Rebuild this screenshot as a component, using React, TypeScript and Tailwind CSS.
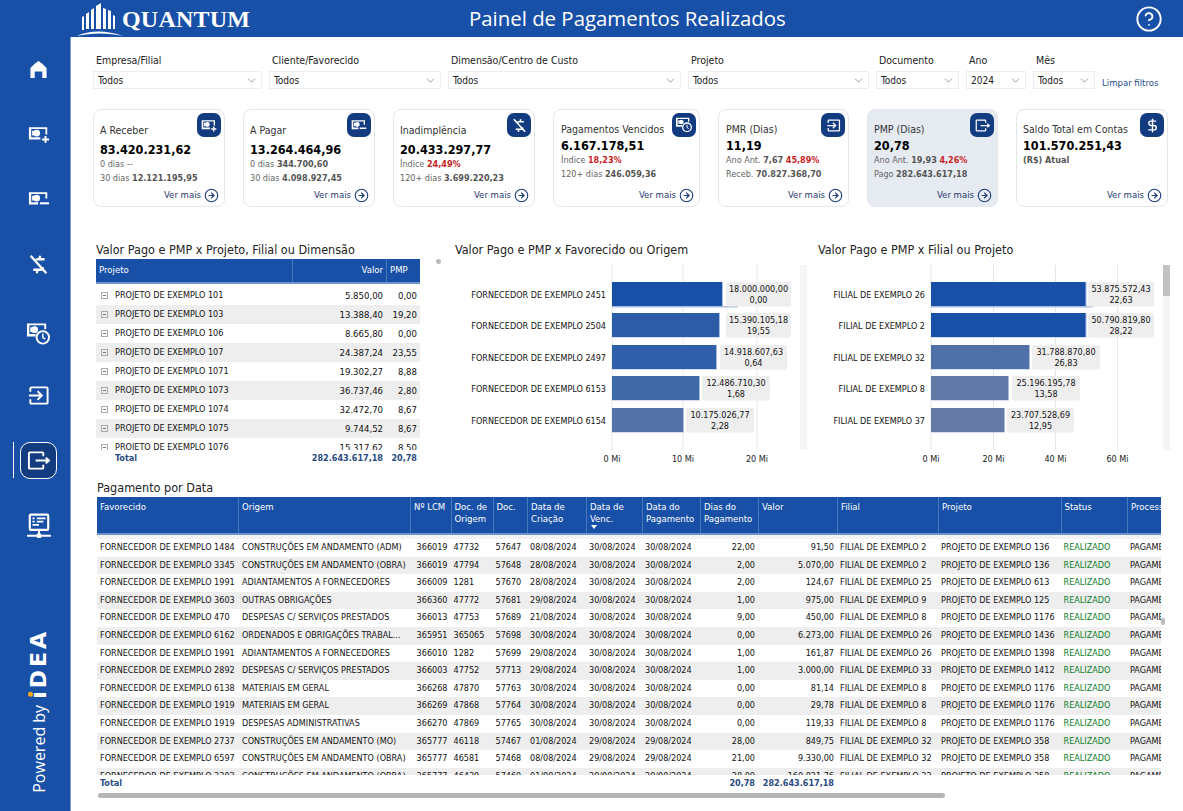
import { CircleArrowRight, CircleHelp, DollarSign, ChevronDown } from "lucide-react";

// ── icons drawn to match the report's own set ──
function MoneyPlus({ className }: { className?: string }) {
  return (
    <svg viewBox="0 0 24 18" className={className} fill="currentColor">
      <path d="M1 1h20v8h-2V3H3.500v9h10v2.500H1z" />
      <circle cx="9.500" cy="7.500" r="3.600" />
      <path d="M4.500 5h2v5h-2z" />
      <path d="M18 10.500h2.200v2.800H23v2.200h-2.800v2.500H18v-2.500h-2.800v-2.200H18z" />
    </svg>
  );
}

function MoneyMinus({ className }: { className?: string }) {
  return (
    <svg viewBox="0 0 24 18" className={className} fill="currentColor">
      <path d="M1 1h20v7h-2V3H3.500v9H11v2.500H1z" />
      <circle cx="9.500" cy="7.500" r="3.600" />
      <path d="M4.500 5h2v5h-2z" />
      <path d="M13 12h10v2.300H13z" />
    </svg>
  );
}

function NoDollar({ className }: { className?: string }) {
  return (
    <svg viewBox="0 0 24 24" className={className} fill="none" stroke="currentColor" strokeWidth="2.600">
      <path d="M3 2l18 20" />
      <path d="M14 2l-1 4M11 18l-1 4" />
      <path d="M19 6h-8a3 3 0 0 0-2 1M17 15a3 3 0 0 1-3 3H6" />
    </svg>
  );
}

function MoneyClock({ className }: { className?: string }) {
  return (
    <svg viewBox="0 0 26 24" className={className}>
      <path fill="currentColor" d="M1 1h20v6h-2V3H3.500v9H10v2.500H1z" />
      <circle cx="9" cy="7.500" r="3.500" fill="currentColor" />
      <path fill="currentColor" d="M4.500 5h2v5h-2z" />
      <circle cx="17.500" cy="15.500" r="6.500" fill="none" stroke="currentColor" strokeWidth="2" />
      <path d="M17.500 11.500v4.300l2.500 1.500" fill="none" stroke="currentColor" strokeWidth="1.500" />
    </svg>
  );
}

function LogIn({ className }: { className?: string }) {
  return (
    <svg viewBox="0 0 24 24" className={className} fill="none" stroke="currentColor" strokeWidth="2">
      <path d="M3.500 8V4.500a1 1 0 0 1 1-1h16a1 1 0 0 1 1 1v15a1 1 0 0 1-1 1h-16a1 1 0 0 1-1-1V16" />
      <path d="M2 12h13M11 7.500l4.500 4.500-4.500 4.500" />
    </svg>
  );
}

function LogOut({ className }: { className?: string }) {
  return (
    <svg viewBox="0 0 24 24" className={className} fill="none" stroke="currentColor" strokeWidth="2">
      <path d="M17 7.500V4.500a1 1 0 0 0-1-1H3a1 1 0 0 0-1 1v15a1 1 0 0 0 1 1h13a1 1 0 0 0 1-1v-3" />
      <path d="M9 12h14M19.500 9l3.500 3-3.500 3" />
    </svg>
  );
}

function Home({ className }: { className?: string }) {
  return (
    <svg viewBox="0 0 20 20" className={className} fill="currentColor">
      <path d="M10 1l4 3 4.500 4.500V19H14v-7H6v7H1.500V8.500L6 4z" />
    </svg>
  );
}

function Monitor({ className }: { className?: string }) {
  return (
    <svg viewBox="0 0 24 24" className={className} fill="none" stroke="currentColor">
      <rect x="3.500" y="1.500" width="17" height="14" rx="1" strokeWidth="2" />
      <path d="M6 5h2M10 5h8M6 8h2M10 8h6M6 11h6" strokeWidth="1.500" />
      <path d="M1 21h22M12 16v5" strokeWidth="1.800" />
      <rect x="10" y="19" width="4" height="4" fill="currentColor" stroke="none" />
    </svg>
  );
}

function QuantumMark() {
  return (
    <svg viewBox="0 0 46 36" className="h-[36px] w-[46px] text-white" fill="currentColor">
      <path d="M9 28V13l3-2v17zM14 28V9l3-2v21zM19 28V5l5-3v26zM26 28V7l3 1v20zM31 28V9l3 1v18zM36 28V14l2 1v13zM5 29V16l2-1v14z" />
      <path d="M0 35c12-6 30-6 46 0-14-3.500-32-3.500-46 0z" />
    </svg>
  );
}

// ── filter bar ──
const FILTERS = [
  { label: "Empresa/Filial", value: "Todos", width: "w-[169px]" },
  { label: "Cliente/Favorecido", value: "Todos", width: "w-[172px]" },
  { label: "Dimensão/Centro de Custo", value: "Todos", width: "w-[233px]" },
  { label: "Projeto", value: "Todos", width: "w-[181px]" },
  { label: "Documento", value: "Todos", width: "w-[83px]" },
  { label: "Ano", value: "2024", width: "w-[60px]" },
  { label: "Mês", value: "Todos", width: "w-[62px]" },
];

function FilterSelect({ label, value, width }: { label: string; value: string; width: string }) {
  return (
    <div className={width}>
      <div className="h-[17px] pl-[3px] text-[10.5px] leading-[13px] text-[#222]">{label}</div>
      <div className="flex h-[18px] items-center justify-between border border-[#eeeeee] pl-[4px] pr-[3px] text-[10px] text-[#222]">
        <span>{value}</span>
        <ChevronDown size={13} strokeWidth={1} className="text-[#444]" />
      </div>
    </div>
  );
}

// ── KPI cards ──
type Kpi = {
  title: string;
  value: string;
  width: string;
  icon: React.ReactNode;
  compact?: boolean;
  active?: boolean;
  inset?: boolean;
  lines: React.ReactNode[];
};

const B = ({ children }: { children: React.ReactNode }) => <span className="font-bold text-[#555]">{children}</span>;
const R = ({ children }: { children: React.ReactNode }) => <span className="font-bold text-[#c81e1e]">{children}</span>;

const KPIS: Kpi[] = [
  {
    title: "A Receber",
    value: "83.420.231,62",
    width: "w-[132px]",
    icon: <MoneyPlus className="h-[13px] w-[16px]" />,
    lines: [<>0 dias --</>, <>30 dias <B>12.121.195,95</B></>],
  },
  {
    title: "A Pagar",
    value: "13.264.464,96",
    width: "w-[132px]",
    icon: <MoneyMinus className="h-[13px] w-[16px]" />,
    lines: [<>0 dias <B>344.700,60</B></>, <>30 dias <B>4.098.927,45</B></>],
  },
  {
    title: "Inadimplência",
    value: "20.433.297,77",
    width: "w-[142px]",
    icon: <NoDollar className="h-[15px] w-[15px]" />,
    lines: [<>Índice <R>24,49%</R></>, <>120+ dias <B>3.699.220,23</B></>],
  },
  {
    title: "Pagamentos Vencidos",
    value: "6.167.178,51",
    width: "w-[147px]",
    compact: true,
    inset: true,
    icon: <MoneyClock className="h-[16px] w-[18px]" />,
    lines: [<>Índice <R>18,23%</R></>, <>120+ dias <B>246.059,36</B></>],
  },
  {
    title: "PMR (Dias)",
    value: "11,19",
    width: "w-[131px]",
    compact: true,
    inset: true,
    icon: <LogIn className="h-[15px] w-[15px]" />,
    lines: [<>Ano Ant. <B>7,67</B> <R>45,89%</R></>, <>Receb. <B>70.827.368,70</B></>],
  },
  {
    title: "PMP (Dias)",
    value: "20,78",
    width: "w-[131px]",
    compact: true,
    active: true,
    icon: <LogOut className="h-[15px] w-[15px]" />,
    lines: [<>Ano Ant. <B>19,93</B> <R>4,26%</R></>, <>Pago <B>282.643.617,18</B></>],
  },
  {
    title: "Saldo Total em Contas",
    value: "101.570.251,43",
    width: "w-[152px]",
    compact: true,
    icon: <DollarSign size={15} strokeWidth={2.2} />,
    lines: [<B>(R$) Atual</B>],
  },
];

function KpiCard({ kpi }: { kpi: Kpi }) {
  return (
    <div
      className={`relative flex h-[98px] flex-col rounded-lg border border-[#e4e6ea] pr-[3px] ${kpi.width} ${
        kpi.active ? "bg-[#e6eaf1]" : "bg-white"
      } ${kpi.compact ? "pt-[13px]" : "pt-[14px]"} ${kpi.inset ? "pl-[7px]" : "pl-[6px]"}`}
    >
      <div className="absolute right-[3px] top-[3px] flex h-[24px] w-[24px] items-center justify-center rounded-[7px] bg-[#133b80] text-white">
        {kpi.icon}
      </div>
      <div className="text-[10.5px] leading-[13px] text-[#333]">{kpi.title}</div>
      <div className={`text-[12.5px] font-bold leading-[15px] text-black ${kpi.compact ? "mt-[2px]" : "mt-[5px]"}`}>{kpi.value}</div>
      <div className="flex flex-col text-[9px] leading-[14px] text-[#666]">
        {kpi.lines.map((line, i) => (
          <div key={i}>{line}</div>
        ))}
      </div>
      <div className="mr-[2px] mt-auto mb-[3px] flex items-center justify-end gap-[3px] text-[9.5px] text-[#1f3a6e]">
        <span>Ver mais</span>
        <CircleArrowRight size={15} strokeWidth={1.8} className="text-[#1f3f7f]" />
      </div>
    </div>
  );
}

// ── project matrix ──
const PROJECTS = [
  ["PROJETO DE EXEMPLO 101", "5.850,00", "0,00"],
  ["PROJETO DE EXEMPLO 103", "13.388,40", "19,20"],
  ["PROJETO DE EXEMPLO 106", "8.665,80", "0,00"],
  ["PROJETO DE EXEMPLO 107", "24.387,24", "23,55"],
  ["PROJETO DE EXEMPLO 1071", "19.302,27", "8,88"],
  ["PROJETO DE EXEMPLO 1073", "36.737,46", "2,80"],
  ["PROJETO DE EXEMPLO 1074", "32.472,70", "8,67"],
  ["PROJETO DE EXEMPLO 1075", "9.744,52", "8,67"],
  ["PROJETO DE EXEMPLO 1076", "15.317,62", "8,50"],
];

function ProjectMatrix() {
  return (
    <div className="w-[324px] text-[9px]">
      <div className="grid h-[25px] grid-cols-[196px_94px_34px] border-b-2 border-[#6f94cc] bg-[#1850a8] text-[9.5px] text-white">
        <div className="px-[3px] pt-[4px]">Projeto</div>
        <div className="border-l border-[#4a78bd] px-[3px] pt-[4px] text-right">Valor</div>
        <div className="border-l border-[#4a78bd] px-[3px] pt-[4px]">PMP</div>
      </div>
      <div className="h-[166px] overflow-hidden pt-[2px]">
        {PROJECTS.map((row, i) => (
          <div
            key={row[0]}
            className={`grid h-[19px] grid-cols-[196px_94px_34px] items-center text-[#111] ${i % 2 === 1 ? "bg-[#eeeeee]" : "bg-white"}`}
          >
            <div className="flex items-center gap-[7px] pl-[5px] whitespace-nowrap">
              <span className="flex h-[7px] w-[7px] items-center justify-center border border-[#aaa]">
                <span className="h-px w-[3px] bg-[#777]" />
              </span>
              {row[0]}
            </div>
            <div className="pr-[3px] pt-[1px] text-right text-[9.5px]">{row[1]}</div>
            <div className="pr-[3px] pt-[1px] text-right text-[9.5px]">{row[2]}</div>
          </div>
        ))}
      </div>
      <div className="grid h-[17px] grid-cols-[196px_94px_34px] items-center font-bold text-[#2a4a80]">
        <div className="pl-[19px]">Total</div>
        <div className="pr-[3px] text-right">282.643.617,18</div>
        <div className="pr-[3px] text-right">20,78</div>
      </div>
    </div>
  );
}

// ── horizontal bar charts (coordinates local to each chart box) ──
type Bar = { label: string; end: number; under?: number; box: [number, number]; value: string; pmp: string; color: string };

const BAR_Y = [23, 54, 86, 117, 149];

const FAVORECIDO: Bar[] = [
  { label: "FORNECEDOR DE EXEMPLO 2451", end: 283, under: 298, box: [286, 351], value: "18.000.000,00", pmp: "0,00", color: "#1850a8" },
  { label: "FORNECEDOR DE EXEMPLO 2504", end: 280, box: [286, 351], value: "15.390.105,18", pmp: "19,55", color: "#2c5ca8" },
  { label: "FORNECEDOR DE EXEMPLO 2497", end: 277, box: [280, 347], value: "14.918.607,63", pmp: "0,64", color: "#2f5fa9" },
  { label: "FORNECEDOR DE EXEMPLO 6153", end: 260, box: [262, 330], value: "12.486.710,30", pmp: "1,68", color: "#4069a8" },
  { label: "FORNECEDOR DE EXEMPLO 6154", end: 244, box: [246, 314], value: "10.175.026,77", pmp: "2,28", color: "#5573a8" },
];

const FILIAL: Bar[] = [
  { label: "FILIAL DE EXEMPLO 26", end: 278.500, under: 285, box: [280, 346], value: "53.875.572,43", pmp: "22,63", color: "#1850a8" },
  { label: "FILIAL DE EXEMPLO 2", end: 278.500, box: [280, 346], value: "50.790.819,80", pmp: "28,22", color: "#1850a8" },
  { label: "FILIAL DE EXEMPLO 32", end: 222, box: [224, 292], value: "31.788.870,80", pmp: "26,83", color: "#5070a8" },
  { label: "FILIAL DE EXEMPLO 8", end: 201, box: [204, 272], value: "25.196.195,78", pmp: "13,58", color: "#6079a6" },
  { label: "FILIAL DE EXEMPLO 37", end: 197, box: [199, 266], value: "23.707.528,69", pmp: "12,95", color: "#657ba6" },
];

function BarChart({
  width,
  zero,
  ticks,
  bars,
  track,
  thumb,
}: {
  width: number;
  zero: number;
  ticks: [string, number][];
  bars: Bar[];
  track: number;
  thumb?: boolean;
}) {
  return (
    <svg width={width} height={208} className="block text-[9px]">
      <rect x={track} y={6} width={7} height={185} fill="#f5f5f5" />
      {thumb && <rect x={track} y={6} width={7} height={31} fill="#c2c2c2" />}
      {ticks.map(([t, x]) => (
        <g key={t}>
          <line x1={x} x2={x} y1={6} y2={191} stroke="#e6e6e6" />
          <text x={x} y={203} textAnchor="middle" fill="#222">
            {t}
          </text>
        </g>
      ))}
      {bars.map((b, i) => {
        const y = BAR_Y[i];
        return (
          <g key={b.label}>
            <text x={zero - 6} y={y + 15.500} textAnchor="end" fill="#111">
              {b.label}
            </text>
            {b.under && <rect x={zero} y={y + 24} width={b.under - zero} height={1.500} fill="#a9bedf" />}
            <rect x={zero} y={y} width={b.end - zero} height={24.500} fill="#a9bedf" />
            <rect x={zero} y={y} width={b.end - zero - 1} height={24} fill={b.color} />
            <rect x={b.box[0]} y={y} width={b.box[1] - b.box[0]} height={24.500} rx={2} fill="#eeeeee" />
            <text x={(b.box[0] + b.box[1]) / 2} y={y + 10} textAnchor="middle" fill="#111">
              {b.value}
            </text>
            <text x={(b.box[0] + b.box[1]) / 2} y={y + 20.500} textAnchor="middle" fill="#111">
              {b.pmp}
            </text>
          </g>
        );
      })}
    </svg>
  );
}

// ── detail table ──
const DETAIL_COLS = "grid-cols-[141px_172px_40.5px_42px_34.5px_59px_56px_58px_58px_79px_101px_122.5px_66.5px_34px]";

const DETAIL_HEAD = [
  ["Favorecido"],
  ["Origem"],
  ["Nº LCM"],
  ["Doc. de", "Origem"],
  ["Doc."],
  ["Data de", "Criação"],
  ["Data de", "Venc."],
  ["Data do", "Pagamento"],
  ["Dias do", "Pagamento"],
  ["Valor"],
  ["Filial"],
  ["Projeto"],
  ["Status"],
  ["Processo"],
];

const DETAIL_ROWS = [
  ["1484", "CONSTRUÇÕES EM ANDAMENTO (ADM)", "366019", "47732", "57647", "08/08/2024", "30/08/2024", "22,00", "91,50", "2", "136"],
  ["3345", "CONSTRUÇÕES EM ANDAMENTO (OBRA)", "366019", "47794", "57648", "28/08/2024", "30/08/2024", "2,00", "5.070,00", "2", "136"],
  ["1991", "ADIANTAMENTOS A FORNECEDORES", "366009", "1281", "57670", "28/08/2024", "30/08/2024", "2,00", "124,67", "25", "613"],
  ["3603", "OUTRAS OBRIGAÇÕES", "366360", "47772", "57681", "29/08/2024", "30/08/2024", "1,00", "975,00", "9", "125"],
  ["470", "DESPESAS C/ SERVIÇOS PRESTADOS", "366013", "47753", "57689", "21/08/2024", "30/08/2024", "9,00", "450,00", "8", "1176"],
  ["6162", "ORDENADOS E OBRIGAÇÕES TRABAL...", "365951", "365065", "57698", "30/08/2024", "30/08/2024", "0,00", "6.273,00", "26", "1436"],
  ["1991", "ADIANTAMENTOS A FORNECEDORES", "366010", "1282", "57699", "29/08/2024", "30/08/2024", "1,00", "161,87", "26", "1398"],
  ["2892", "DESPESAS C/ SERVIÇOS PRESTADOS", "366003", "47752", "57713", "29/08/2024", "30/08/2024", "1,00", "3.000,00", "33", "1412"],
  ["6138", "MATERIAIS EM GERAL", "366268", "47870", "57763", "30/08/2024", "30/08/2024", "0,00", "81,14", "8", "1176"],
  ["1919", "MATERIAIS EM GERAL", "366269", "47868", "57764", "30/08/2024", "30/08/2024", "0,00", "29,78", "8", "1176"],
  ["1919", "DESPESAS ADMINISTRATIVAS", "366270", "47869", "57765", "30/08/2024", "30/08/2024", "0,00", "119,33", "8", "1176"],
  ["2737", "CONSTRUÇÕES EM ANDAMENTO (MO)", "365777", "46118", "57467", "01/08/2024", "29/08/2024", "28,00", "849,75", "32", "358"],
  ["6597", "CONSTRUÇÕES EM ANDAMENTO (OBRA)", "365777", "46581", "57468", "08/08/2024", "29/08/2024", "21,00", "9.330,00", "32", "358"],
  ["3303", "CONSTRUÇÕES EM ANDAMENTO (OBRA)", "365777", "46430", "57469", "01/08/2024", "29/08/2024", "28,00", "160.821,76", "32", "358"],
];

function DetailTable() {
  return (
    <div className="ml-[4px] w-[1064px]">
      <div className={`grid h-[38px] ${DETAIL_COLS} border-b-2 border-[#6f94cc] bg-[#1850a8] text-[9.5px] leading-[12px] text-white`}>
        {DETAIL_HEAD.map((lines, i) => (
          <div
            key={lines.join()}
            className={`overflow-hidden whitespace-nowrap border-[#4a78bd] pl-[3px] pt-[4px] ${i > 0 ? "border-l" : ""} ${i === 13 ? "w-[34px]" : ""}`}
          >
            {lines.map((l) => (
              <div key={l}>{l}</div>
            ))}
            {i === 6 && <div className="ml-[1px] h-0 w-0 border-x-[3px] border-t-[4px] border-x-transparent border-t-white" />}
          </div>
        ))}
      </div>
      <div className="h-[240px] overflow-hidden border-t-[4px] border-[#f3f3f3] text-[9px] text-[#111]">
        {DETAIL_ROWS.map((r, i) => (
          <div key={i} className={`grid h-[17.6px] ${DETAIL_COLS} items-center whitespace-nowrap ${i % 2 === 1 ? "bg-[#eeeeee]" : "bg-white"}`}>
            <div className="pl-[3px]">FORNECEDOR DE EXEMPLO {r[0]}</div>
            <div className="overflow-hidden pl-[4px]">{r[1]}</div>
            <div className="pr-[3px] text-right">{r[2]}</div>
            <div className="pl-[3px]">{r[3]}</div>
            <div className="pl-[3px]">{r[4]}</div>
            <div className="pl-[3px]">{r[5]}</div>
            <div className="pl-[3px]">{r[6]}</div>
            <div className="pl-[3px]">{r[6]}</div>
            <div className="pr-[3px] text-right">{r[7]}</div>
            <div className="pr-[3px] text-right">{r[8]}</div>
            <div className="pl-[3px]">FILIAL DE EXEMPLO {r[9]}</div>
            <div className="pl-[3px]">PROJETO DE EXEMPLO {r[10]}</div>
            <div className="pl-[3px] text-[#0a7d2a]">REALIZADO</div>
            <div className="w-[34px] overflow-hidden pl-[3px]">PAGAMENTO</div>
          </div>
        ))}
      </div>
      <div className={`grid h-[16px] ${DETAIL_COLS} items-center pt-[2px] text-[9px] font-bold text-[#2a4a80]`}>
        <div className="pl-[3px]">Total</div>
        <div className="col-span-7" />
        <div className="pr-[3px] text-right">20,78</div>
        <div className="pr-[3px] text-right">282.643.617,18</div>
      </div>
      <div className="mt-[2px] ml-[1px] h-[5px] w-[847px] rounded-full bg-[#b4b4b4]" />
    </div>
  );
}

const NAV = [
  <Home className="h-[19px] w-[19px]" />,
  <MoneyPlus className="h-[17px] w-[22px]" />,
  <MoneyMinus className="h-[17px] w-[22px]" />,
  <NoDollar className="h-[21px] w-[21px]" />,
  <MoneyClock className="mt-[7px] h-[24px] w-[25px]" />,
  <LogIn className="h-[23px] w-[23px]" />,
  null,
  <Monitor className="h-[26px] w-[26px]" />,
];

export default function App() {
  return (
    <div className="flex h-[811px] w-[1183px] flex-col overflow-hidden bg-white font-['DejaVu_Sans_Condensed','DejaVu_Sans',sans-serif]">
      <header className="flex h-[37px] shrink-0 items-center bg-[#1850a8] pl-[77px] pr-[20px] text-white">
        <div className="flex w-[392px] items-center">
          <QuantumMark />
          <span className="ml-[-1px] font-['Liberation_Serif',serif] text-[24px] font-bold leading-none tracking-[0.2px]">QUANTUM</span>
        </div>
        <h1 className="font-['Open_Sans',sans-serif] text-[20.4px] leading-none">Painel de Pagamentos Realizados</h1>
        <CircleHelp size={28} strokeWidth={1.6} className="ml-auto" />
      </header>

      <div className="flex min-h-0 flex-1">
        <aside className="flex w-[71px] shrink-0 flex-col items-center border-r border-[#7b9cd0] bg-[#1850a8] pl-[7px] text-white">
          {NAV.map((icon, i) => (
            <div key={i} className="relative flex h-[65.150px] w-full items-center justify-center">
              {icon ?? (
                <>
                  <span className="absolute left-[6px] top-[14px] h-[36px] w-px bg-white" />
                  <span className="flex h-[37px] w-[37px] items-center justify-center rounded-[10px] border border-white bg-[#133b80]">
                    <LogOut className="h-[23px] w-[23px]" />
                  </span>
                </>
              )}
            </div>
          ))}
          <div className="mt-auto mb-[18px] flex rotate-180 items-center gap-[6px] text-white [writing-mode:vertical-rl]">
            <span className="font-['Open_Sans',sans-serif] text-[16px] leading-none">Powered by</span>
            <span className="relative font-['DejaVu_Sans',sans-serif] text-[22px] font-bold leading-none tracking-[3px]">
              <span className="absolute right-[0px] top-[2px] h-[5px] w-[5px] rounded-full bg-[#f5a81c]" />
              ıDEA
            </span>
          </div>
        </aside>

        <main className="relative min-w-0 flex-1 pl-[22px]">
          <div className="flex items-end gap-[7px] pt-[17px]">
            {FILTERS.map((f) => (
              <FilterSelect key={f.label} {...f} />
            ))}
            <span className="translate-y-[1px] text-[9.5px] leading-[14px] text-[#1f4a90]">Limpar filtros</span>
          </div>

          <div className="mt-[20px] flex gap-[18px]">
            {KPIS.map((k) => (
              <KpiCard key={k.title} kpi={k} />
            ))}
          </div>

          <div className="mt-[36px] flex h-[237px]">
            <div className="ml-[3px]">
              <h2 className="h-[16px] text-[12.5px] leading-[14px] text-[#222]">Valor Pago e PMP x Projeto, Filial ou Dimensão</h2>
              <ProjectMatrix />
            </div>
            <div className="ml-[20px] w-[368px]">
              <h2 className="h-[16px] pl-[15px] text-[12.5px] leading-[14px] text-[#222]">Valor Pago e PMP x Favorecido ou Origem</h2>
              <BarChart
                width={368}
                zero={172}
                ticks={[["0 Mi", 172], ["10 Mi", 243], ["20 Mi", 317]]}
                bars={FAVORECIDO}
                track={360}
              />
            </div>
            <div className="w-[362px]">
              <h2 className="h-[16px] pl-[10px] text-[12.5px] leading-[14px] text-[#222]">Valor Pago e PMP x Filial ou Projeto</h2>
              <BarChart
                width={362}
                zero={123}
                ticks={[["0 Mi", 123], ["20 Mi", 185.500], ["40 Mi", 247.500], ["60 Mi", 309.500]]}
                bars={FILIAL}
                track={355}
                thumb
              />
            </div>
          </div>

          <h2 className="ml-[4px] h-[17px] pt-[1px] text-[12.5px] leading-[14px] text-[#222]">Pagamento por Data</h2>
          <DetailTable />

          <span className="absolute left-[365px] top-[222px] h-[5px] w-[5px] rounded-full bg-[#bbb]" />
          <span className="absolute left-[1090px] top-[581px] h-[7px] w-[4px] rounded-full bg-[#bbb]" />
        </main>
      </div>
    </div>
  );
}
